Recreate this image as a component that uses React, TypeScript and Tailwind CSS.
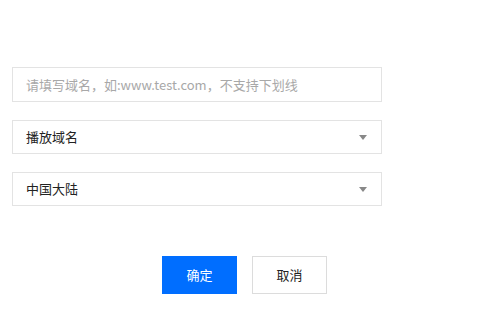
export default function App() {
  const font = { fontFamily: '"Noto Sans CJK SC", "Liberation Sans", sans-serif' };
  return (
    <div className="w-[480px] h-[320px] bg-white overflow-hidden" style={font}>
      <div className="pl-3 pt-[67px] w-[382px] flex flex-col gap-[18px]">
        <div className="h-[35px] border border-[#e3e3e3] flex items-center px-[13px] text-[13px] text-[#a8a8a8]">
          请填写域名，如:www.test.com，不支持下划线
        </div>
        <div className="h-[34px] border border-[#e3e3e3] flex items-center justify-between px-[13px] text-[13px] text-[#222]">
          <span>播放域名</span>
          <svg width="8" height="5" viewBox="0 0 8 5" className="mr-[1px]"><path d="M0 0h8L4 5z" fill="#888" /></svg>
        </div>
        <div className="h-[34px] border border-[#e3e3e3] flex items-center justify-between px-[13px] text-[13px] text-[#222]">
          <span>中国大陆</span>
          <svg width="8" height="5" viewBox="0 0 8 5" className="mr-[1px]"><path d="M0 0h8L4 5z" fill="#888" /></svg>
        </div>
      </div>
      <div className="flex justify-center gap-[15px] mt-[50px] pl-[9px]">
        <button className="w-[75px] h-[38px] bg-[#006eff] text-white text-[13px]">确定</button>
        <button className="w-[75px] h-[38px] bg-white border border-[#dcdcdc] text-[#222] text-[13px]">取消</button>
      </div>
    </div>
  );
}
